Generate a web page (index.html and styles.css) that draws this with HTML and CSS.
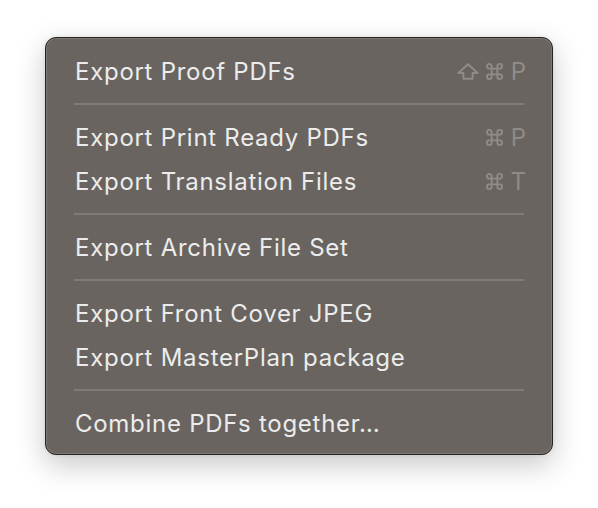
FILE: index.html
```html
<!DOCTYPE html>
<html>
<head>
<meta charset="utf-8">
<link rel="stylesheet" href="styles.css">
</head>
<body>
<div class="stage">
  <div class="menu">
    <div class="item"><span class="label">Export Proof PDFs</span><span class="keys"><svg class="shift" viewBox="0 0 22 17"><path d="M11 1.2 L20.6 10 H15.6 V15.8 H6.4 V10 H1.4 Z"/></svg><svg class="cmd" viewBox="0 0 20 20"><path d="M7 7 V4.5 A2.5 2.5 0 1 0 4.5 7 H15.5 A2.5 2.5 0 1 0 13 4.5 V15.5 A2.5 2.5 0 1 0 15.5 13 H4.5 A2.5 2.5 0 1 0 7 15.5 Z"/></svg><span class="key">P</span></span></div>
    <div class="sep"></div>
    <div class="item"><span class="label">Export Print Ready PDFs</span><span class="keys"><svg class="cmd" viewBox="0 0 20 20"><path d="M7 7 V4.5 A2.5 2.5 0 1 0 4.5 7 H15.5 A2.5 2.5 0 1 0 13 4.5 V15.5 A2.5 2.5 0 1 0 15.5 13 H4.5 A2.5 2.5 0 1 0 7 15.5 Z"/></svg><span class="key">P</span></span></div>
    <div class="item"><span class="label">Export Translation Files</span><span class="keys"><svg class="cmd" viewBox="0 0 20 20"><path d="M7 7 V4.5 A2.5 2.5 0 1 0 4.5 7 H15.5 A2.5 2.5 0 1 0 13 4.5 V15.5 A2.5 2.5 0 1 0 15.5 13 H4.5 A2.5 2.5 0 1 0 7 15.5 Z"/></svg><span class="key">T</span></span></div>
    <div class="sep"></div>
    <div class="item"><span class="label">Export Archive File Set</span></div>
    <div class="sep"></div>
    <div class="item"><span class="label">Export Front Cover JPEG</span></div>
    <div class="item"><span class="label">Export MasterPlan package</span></div>
    <div class="sep"></div>
    <div class="item"><span class="label">Combine PDFs together…</span></div>
  </div>
</div>
</body>
</html>
```
FILE: styles.css
```css
html, body {
  margin: 0;
  padding: 0;
  background: #ffffff;
}
.stage {
  padding: 37px 0 0 45px;
  min-height: 508px;
  box-sizing: border-box;
}
.menu {
  background: #69645f;
  border: 1px solid #262422;
  border-radius: 11px;
  box-shadow: inset 0 0 0 1px rgba(255,255,255,0.14), 0 10px 30px rgba(0,0,0,0.22), 0 0 4px rgba(0,0,0,0.08);
  padding: 11px 0 9px;
  box-sizing: border-box;
  height: 418px;
  width: 508px;
  display: flex;
  flex-direction: column;
  font-family: Inter, "Noto Sans", sans-serif;
}
.item {
  height: 44px;
  display: flex;
  align-items: center;
  justify-content: space-between;
  padding: 0 26px 0 29px;
}
.label {
  color: #ececec;
  font-size: 24px;
  letter-spacing: 0.72px;
}
.keys {
  display: flex;
  align-items: center;
  color: #8f8b87;
  font-size: 24px;
}
.keys svg {
  fill: none;
  stroke: #8f8b87;
  stroke-width: 2;
  stroke-linejoin: round;
}
.shift {
  width: 22px;
  height: 17px;
  margin-right: 6px;
}
.cmd {
  width: 19px;
  height: 19px;
  margin-right: 7px;
}
.key {
  letter-spacing: 0;
}
.sep {
  height: 22px;
  display: flex;
  align-items: center;
  margin: 0 28px;
}
.sep::before {
  content: "";
  flex: 1;
  height: 2px;
  background: #807b77;
}
```
